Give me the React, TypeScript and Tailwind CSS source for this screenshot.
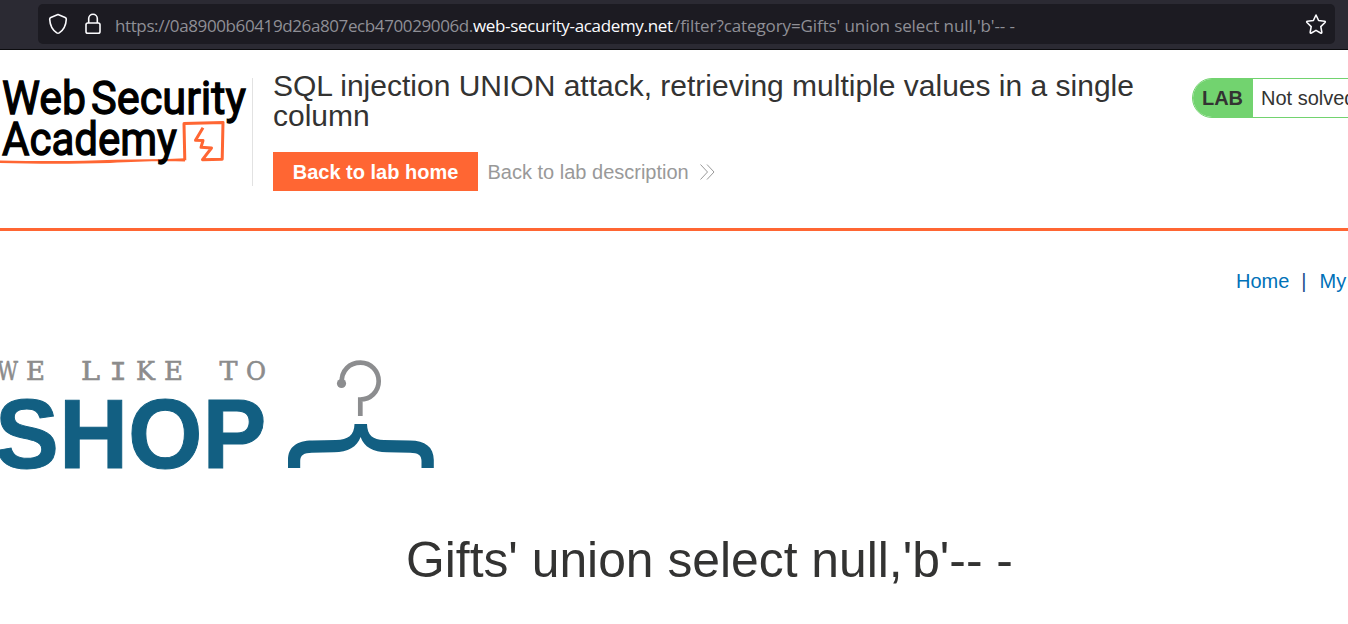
import React from 'react';

function BrowserBar() {
  return (
    <div className="flex h-[50px] items-start border-b border-[#0c0c0f] bg-[#2b2a33] pl-[38px] pr-[13px] pt-1">
      <div className="flex h-10 flex-1 items-center rounded-[5px] bg-[#1c1b22] pl-2.5 pr-2">
        <svg width="20" height="22" viewBox="0 0 20 22" fill="none" stroke="#fbfbfe" strokeWidth="1.6" strokeLinejoin="round" className="shrink-0">
          <path d="M10 1.5 L17.2 4.4 Q18.4 4.9 18.3 6.2 C18 12.5 15.5 17 11.2 19.9 Q10 20.6 8.8 19.9 C4.5 17 2 12.5 1.7 6.2 Q1.6 4.9 2.8 4.4 Z" />
        </svg>
        <svg width="16" height="22" viewBox="0 0 16 22" fill="none" stroke="#fbfbfe" strokeWidth="1.6" className="ml-[17px] shrink-0">
          <rect x="1" y="10" width="14" height="10.2" rx="1.8" />
          <path d="M3.7 10 V5.5 a4.3 4.3 0 0 1 8.6 0 V10" />
        </svg>
        <div className="ml-[14px] flex-1 whitespace-pre pt-1 font-['Open_Sans','Noto_Sans',sans-serif] text-[17px] leading-6 text-[#8f8f96]">
          <span className="inline-block w-[358px] tracking-[-0.39px]">https://0a8900b60419d26a807ecb470029006d.</span>
          <span className="inline-block w-[201px] tracking-[-0.34px] text-[#fbfbfe]">web-security-academy.net</span>
          <span className="tracking-[-0.1px]">/filter?category=Gifts' union select null,'b'-- -</span>
        </div>
        <svg width="22" height="22" viewBox="0 0 22 22" fill="none" stroke="#fbfbfe" strokeWidth="1.6" strokeLinejoin="round" className="shrink-0">
          <path d="M11 2 L13.6 7.5 L19.6 8.3 Q20.8 8.6 20 9.5 L15.8 13.6 L16.8 19.2 Q16.8 20.6 15.6 20 L11 17.4 L6.4 20 Q5.2 20.6 5.2 19.2 L6.2 13.6 L2 9.5 Q1.2 8.6 2.4 8.3 L8.4 7.5 Z" />
        </svg>
      </div>
    </div>
  );
}

function AcademyLogo() {
  return (
    <svg width="252" height="108" viewBox="0 78 252 108" className="shrink-0">
      <path d="M0 160.4 C35 161.2 75 161.6 115 159.8 C138 159 162 159.4 185 158.2 V161.4 C155 161 135 161.5 110 163 C75 164 35 164 0 163 Z" fill="#ff6633" />
      <path d="M184.8 160.3 L184 123.6 L223 122.4 L222.2 159.2 L202.5 159.7 L211.5 148 L201 147.3 L203 140.5 L195.5 140.2 L203 127.8" fill="none" stroke="#ff6633" strokeWidth="3" strokeLinejoin="round" />
      <g fill="#000" stroke="#000" strokeWidth="1.3" className="font-['Roboto',sans-serif] text-[47px] font-normal">
        <text x="2" y="114" textLength="84" lengthAdjust="spacingAndGlyphs">Web</text>
        <text x="91" y="114" textLength="155" lengthAdjust="spacingAndGlyphs">Security</text>
        <text x="2" y="154.5" textLength="175" lengthAdjust="spacingAndGlyphs">Academy</text>
      </g>
    </svg>
  );
}

function LabHeader() {
  return (
    <header className="flex h-[181px] border-b-[3px] border-[#ff6633] pt-7">
      <AcademyLogo />
      <div className="h-[108px] w-px shrink-0 bg-[#e2e2e2]" />
      <div className="ml-5 w-[890px] shrink-0 -mt-[7px]">
        <h2 className="whitespace-nowrap text-[30px] leading-[30px]">
          SQL injection UNION attack, retrieving multiple values in a single
          <br />
          column
        </h2>
        <div className="mt-[21px] flex items-center">
          <a className="flex h-[39px] w-[205px] items-center justify-center bg-[#ff6633] text-xl font-bold text-white">Back to lab home</a>
          <a className="ml-[9.5px] text-xl text-[#999]">Back to lab description</a>
          <svg width="15" height="16" viewBox="0 0 15 16" fill="none" stroke="#999" strokeWidth="1" className="ml-[11px]">
            <path d="M.5 .5 L7.5 8 L.5 15.5 M7 .5 L14 8 L7 15.5" />
          </svg>
        </div>
      </div>
      <div className="ml-[29px] flex h-10 w-[220px] shrink-0 overflow-hidden rounded-l-[20px] border border-[#72d36f] text-xl">
        <span className="flex w-[60px] items-center justify-center bg-[#72d36f] pr-px font-bold">LAB</span>
        <span className="flex items-center pl-2">Not solved</span>
      </div>
    </header>
  );
}

function ShopLogo() {
  return (
    <svg width="440" height="120" viewBox="0 355 440 120" className="mt-[62px]">
      <text y="380" fill="#8c8c8c" stroke="#8c8c8c" strokeWidth="0.6" className="font-['DejaVu_Serif',serif] text-[26px]">
        <tspan x="-3" textLength="21" lengthAdjust="spacingAndGlyphs">W</tspan>
        <tspan x="26" textLength="19" lengthAdjust="spacingAndGlyphs">E</tspan>{' '}
        <tspan x="81" textLength="19" lengthAdjust="spacingAndGlyphs">L</tspan>
        <tspan x="109.5" className="font-['Liberation_Mono',monospace] text-[28.5px]">I</tspan>
        <tspan x="136" textLength="19" lengthAdjust="spacingAndGlyphs">K</tspan>
        <tspan x="164" textLength="19" lengthAdjust="spacingAndGlyphs">E</tspan>{' '}
        <tspan x="219.5" textLength="18" lengthAdjust="spacingAndGlyphs">T</tspan>
        <tspan x="246" textLength="20" lengthAdjust="spacingAndGlyphs">O</tspan>
      </text>
      <text x="-5" y="468" fill="#125f82" stroke="#125f82" strokeWidth="1" textLength="271.5" lengthAdjust="spacingAndGlyphs" className="font-['Liberation_Sans',sans-serif] text-[99px] font-bold">SHOP</text>
      <circle cx="341.5" cy="383.5" r="4.6" fill="#8c8d8f" />
      <path d="M341.8 383 C341 370 350 362.7 360.5 362.7 C371 362.7 378.7 371 378.7 381.3 C378.7 391.5 370.5 399.5 360.3 399.5 V416" fill="none" stroke="#8c8d8f" strokeWidth="4.7" />
      <path d="M354.5 424 H367 C367.2 435 373 440 384 440 L410 440.5 C425 440.5 433.8 447 433.8 460 V468 H421.5 V461 C421.5 455 418 453 410 452.8 L387 452.3 C373 452 364 447 360.6 437 C357 447 348 452 334 452.3 L312 452.8 C304 453 300.2 455 300.2 461 V468 H288 V460 C288 447 297 440.5 312 440.5 L336 440 C348 440 354.3 435 354.5 424 Z" fill="#125f82" />
    </svg>
  );
}

export default function App() {
  return (
    <div className="h-[624px] w-[1348px] overflow-hidden bg-white font-['Liberation_Sans',Arial,sans-serif] text-[#333332]">
      <BrowserBar />
      <LabHeader />
      <nav className="flex h-[62px] items-end whitespace-nowrap pb-0 pl-[1236px] text-xl leading-6 text-[#0071b8]">
        <a>Home</a>
        <span className="ml-[12px] text-[#24508f]">|</span>
        <a className="ml-[13px]">My account</a>
      </nav>
      <ShopLogo />
      <h1 className="mt-[55px] pl-[406px] text-[49.8px] leading-[60px] whitespace-nowrap">Gifts' union select null,'b'-- -</h1>
    </div>
  );
}
